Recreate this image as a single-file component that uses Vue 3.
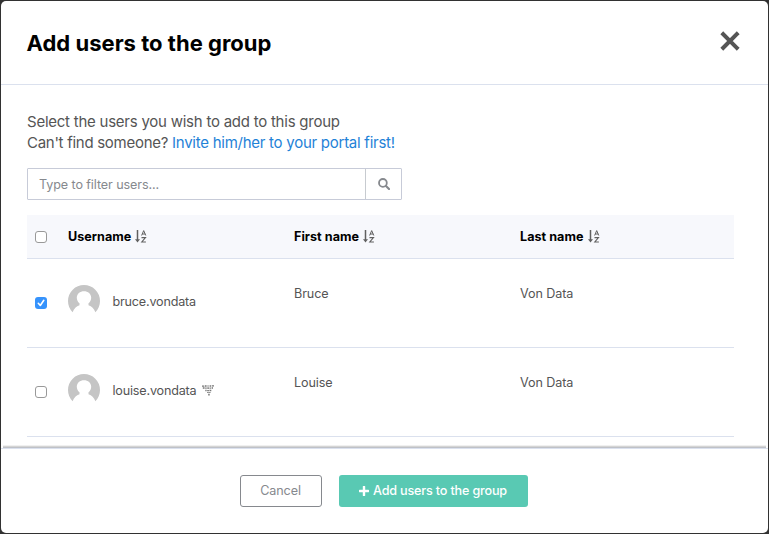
<script setup>
import { ref } from 'vue'

const columns = [
  { label: 'Username', key: 'username' },
  { label: 'First name', key: 'first' },
  { label: 'Last name', key: 'last' },
]
const users = ref([
  { username: 'bruce.vondata', first: 'Bruce', last: 'Von Data', selected: true, managed: false },
  { username: 'louise.vondata', first: 'Louise', last: 'Von Data', selected: false, managed: true },
])
</script>

<template>
  <div class="backdrop">
    <section class="modal">
      <header class="head">
        <h1><span>Add users to the group</span></h1>
        <button class="close" aria-label="Close">
          <svg width="20" height="20" viewBox="0 0 20 20"><path d="M3.2 3.2 16.8 16.8M16.8 3.2 3.2 16.8" stroke="#555" stroke-width="4" stroke-linecap="square" /></svg>
        </button>
      </header>
      <main class="body">
        <p class="intro">
          <span class="line">Select the users you wish to add to this group</span>
          <span class="line second">Can't find someone? <a>Invite him/her to your portal first!</a></span>
        </p>
        <div class="filter">
          <div class="field">Type to filter users...</div>
          <button class="search" aria-label="Search">
            <svg width="12" height="12" viewBox="0 0 12 12" fill="none" stroke="#86898e"><circle cx="4.9" cy="4.9" r="3.9" stroke-width="1.8" /><path d="M8 8l3 3" stroke-width="2.1" stroke-linecap="round" /></svg>
          </button>
        </div>
        <div class="table">
          <div class="row titles">
            <span class="box"></span>
            <div v-for="c in columns" :key="c.key" class="title">
              <span>{{ c.label }}</span>
              <svg width="12" height="13" viewBox="0 0 12 13" fill="none" stroke="#606060"><path d="M2.5 0v10" stroke-width="1.5" /><path d="M0 9.2h5L2.5 12.6z" fill="#606060" stroke="none" /><path d="M6.6 5.5 8.7.6 10.8 5.5M7.2 4h3" stroke-width="1" /><path d="M6.5 7.6h4L6.8 12h4.1" stroke-width="1.1" /></svg>
            </div>
          </div>
          <div v-for="u in users" :key="u.username" class="row user">
            <span class="box" :class="{ checked: u.selected }">
              <svg v-if="u.selected" width="12" height="12" viewBox="0 0 12 12"><path d="M3.3 6.3 5.3 8.5 8.8 3.3" fill="none" stroke="#fff" stroke-width="1.6" stroke-linecap="round" stroke-linejoin="round" /></svg>
            </span>
            <div class="identity">
              <svg class="avatar" width="32" height="32" viewBox="0 0 32 32"><path d="M4.6 27.3A16 16 0 1 1 27.4 27.3C26 23.7 23.7 21.2 20.5 20.2V18.3C22.2 17 23.2 15 23.2 12.8C23.2 8.8 20 6.2 16 6.2S8.8 8.8 8.8 12.8C8.8 15 9.8 17 11.5 18.3V20.2C8.3 21.2 6 23.7 4.6 27.3Z" fill="#c5c5c5" /></svg>
              <span class="username">{{ u.username }}</span>
              <svg v-if="u.managed" class="badge" width="12" height="11" viewBox="0 0 12 11" fill="#777"><path d="M0 .5h2.4v1.2H0zM3 .3h1.6v1.5H3zM5.3.5h1.5v1H5.3zM7.6.3h1.5v1.4H7.6zM9.8.3H12v1.2H9.8zM.8 2.3h1.8v1.5H.8zM3.2 2.4h1.5v1.4H3.2zM5.4 2.3h1.4v1.6H5.4zM7.5 2.4h1.4v1.3H7.5zM9.6 2.2H11v1.5H9.6zM3.3 4.7h1.3v1.6H3.3zM5.2 5h1.7v1.3H5.2zM7.5 4.7h1.8v1.5H7.5zM5.2 7h1.5v1H5.2zM7.2 7h1.3v1H7.2zM6.2 8.8h1.5v1.8H6.2z" /></svg>
            </div>
            <span class="cell">{{ u.first }}</span>
            <span class="cell">{{ u.last }}</span>
          </div>
        </div>
      </main>
      <footer class="foot">
        <button class="btn cancel"><span>Cancel</span></button>
        <button class="btn submit">
          <svg width="10" height="10" viewBox="0 0 10 10"><path d="M5 .8v8.4M.8 5h8.4" stroke="#fff" stroke-width="2.4" stroke-linecap="round" /></svg>
          <span>Add users to the group</span>
        </button>
      </footer>
    </section>
  </div>
</template>

<style>
body { background: #323232; }
</style>

<style scoped>
* { box-sizing: border-box; }
.backdrop { height: 534px; padding: 1px; background: #323232; font-family: Inter, "Liberation Sans", sans-serif; color: #555; font-size: 12.6px; }
.modal { height: 532px; border-radius: 5px; background: #fff; overflow: hidden; display: flex; flex-direction: column; }
button { font: inherit; padding: 0; background: none; border: 0; display: flex; align-items: center; justify-content: center; }
.head { height: 84px; flex: none; border-bottom: 1px solid #dbe1ee; display: flex; align-items: center; justify-content: space-between; padding: 0 28.5px 0 25.5px; }
h1 { margin: 0; font-size: 22px; line-height: 28px; font-weight: 650; letter-spacing: .02px; color: #000; white-space: nowrap; }
.close { margin-top: -3px; }
svg { display: block; flex: none; }
.body { height: 363px; flex: none; overflow: hidden; padding: 26px 34px 0 26px; position: relative; }
.body::after { content: ""; position: absolute; left: 2px; right: 2px; bottom: 0; height: 3px; background: linear-gradient(#f0f0f0 33.3%, #d4d4d4 33.3% 66.6%, #bec1c8 66.6%); }
.intro { margin: 0; font-size: 15px; line-height: 21px; white-space: nowrap; letter-spacing: -.24px; }
.line { display: block; }
.second { letter-spacing: -.28px; }
.second a { letter-spacing: -.26px; }
a { color: #1f82d7; }
.filter { display: flex; width: 375px; height: 32px; margin: 15px 0; border: 1px solid #c7cbd8; border-radius: 1px; }
.field { width: 337px; padding-left: 11px; line-height: 31px; color: #86898e; letter-spacing: -.1px; }
.search { flex: 1; border-left: 1px solid #c7cbd0; }
.row { display: grid; grid-template-columns: 41px 226px 226px 1fr; border-bottom: 1px solid #dbe1ee; align-items: center; }
.titles { height: 44px; background: #f7f8fc; }
.title { display: flex; align-items: center; gap: 4px; color: #000; font-weight: 650; letter-spacing: .03px; }
.user { height: 89px; padding-bottom: 4px; }
.box { width: 12px; height: 12px; margin-left: 8px; border: 1px solid #999; border-radius: 3px; background: #fff; }
.user .box { margin-top: 4px; }
.box.checked { border: 0; background: #3693fc; }
.identity { display: flex; align-items: center; }
.avatar { margin-right: 12.5px; }
.username { letter-spacing: -.19px; }
.badge { margin-left: 6px; }
.cell { margin-top: -16px; letter-spacing: -.1px; }
.foot { flex: 1; border-top: 1px solid #dbe1ee; display: flex; justify-content: center; padding: 26px 2px 0 0; gap: 17px; }
.btn { height: 32px; border-radius: 3px; letter-spacing: -.1px; padding-bottom: 1px; }
.cancel { width: 82px; border: 1px solid #86898e; color: #86898e; }
.submit { width: 189px; background: #59c9b3; color: #fff; font-weight: 500; gap: 4px; letter-spacing: -.17px; }
</style>
